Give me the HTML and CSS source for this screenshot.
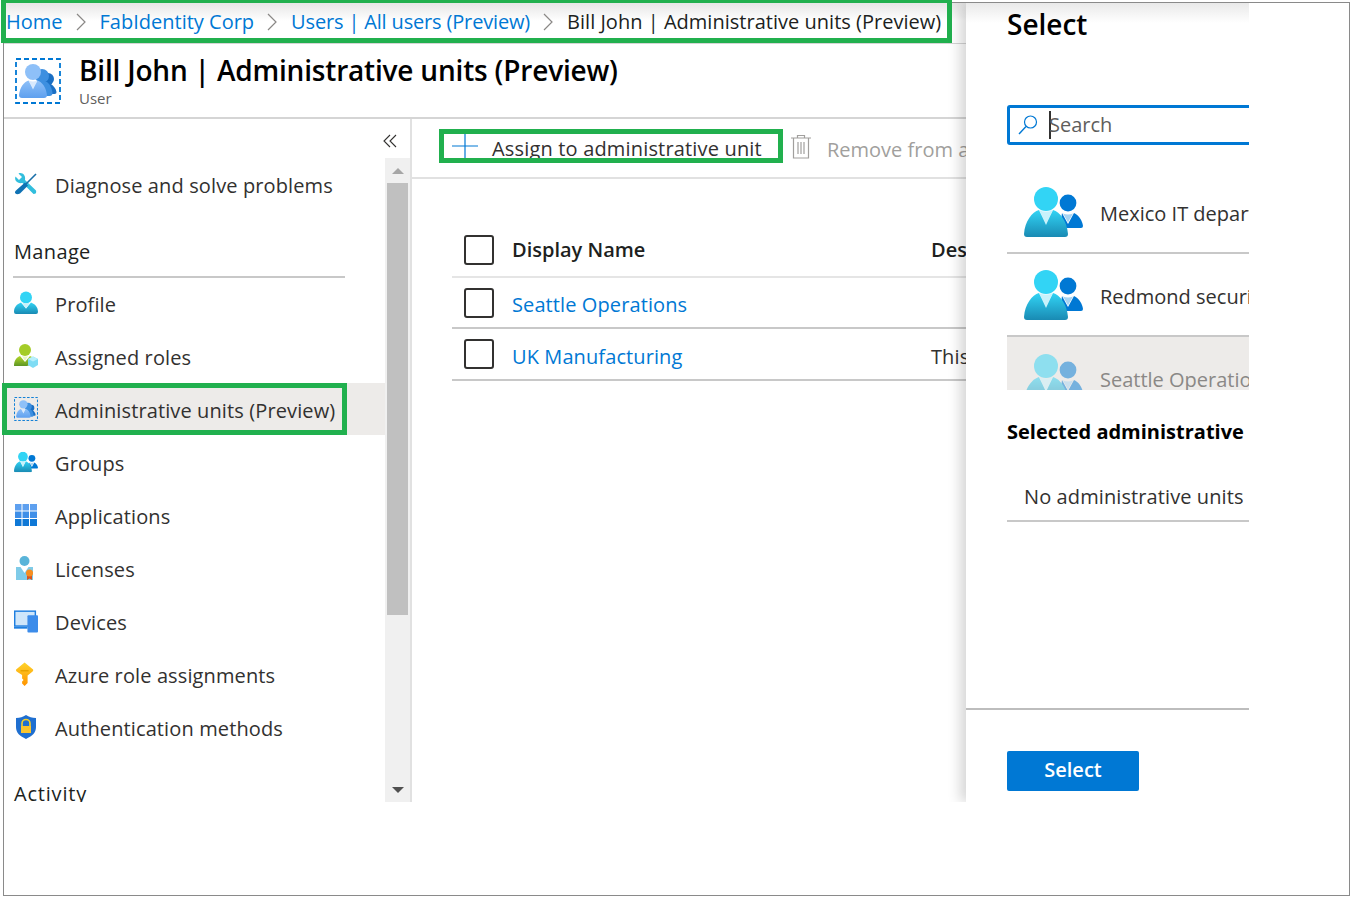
FILE: index.html
```html
<!DOCTYPE html>
<html lang="en">
<head>
<meta charset="utf-8">
<title>Bill John | Administrative units (Preview)</title>
<link rel="stylesheet" href="styles.css">
</head>
<body>
<svg class="defs" aria-hidden="true">
  <defs>
    <linearGradient id="gCyan" x1="0" y1="0" x2="0" y2="1"><stop offset="0" stop-color="#32d4f5"/><stop offset="1" stop-color="#198ab3"/></linearGradient>
    <linearGradient id="gPale" x1="0" y1="0" x2="0" y2="1"><stop offset="0" stop-color="#8ec0f8"/><stop offset="1" stop-color="#5ea0ef"/></linearGradient>
    <linearGradient id="gGreen" x1="0" y1="0" x2="0" y2="1"><stop offset="0" stop-color="#b4d82a"/><stop offset="1" stop-color="#5e9624"/></linearGradient>
    <linearGradient id="gKey" x1="0" y1="0" x2="0" y2="1"><stop offset="0" stop-color="#fed32a"/><stop offset="1" stop-color="#ff9300"/></linearGradient>
    <symbol id="people" viewBox="0 0 59 50">
      <circle cx="44" cy="16" r="8.400" fill="#0078d4"/>
      <path d="M36 40 38 26l6 11 6-11c5 2 8.500 8 9 13q0 2-2 2H36z" fill="#0078d4"/>
      <path d="M39 26.500q5 2 10 0l-5 9z" fill="#a8d4f2"/>
      <circle cx="22" cy="12" r="12" fill="#32d4f5"/>
      <path d="M0 47C1 34 8 25 15 23l7 13 7-13c7 2 14 11 15 24q0 3-3 3H3q-3 0-3-3z" fill="url(#gCyan)"/>
      <path d="M15 23q7 3 14 0l-7 15z" fill="#c8f2fb"/>
    </symbol>
    <symbol id="unit" viewBox="0 0 46 46">
      <rect x="1" y="1" width="44" height="44" fill="none" stroke="#0078d4" stroke-width="1.800" stroke-dasharray="5 3"/>
      <circle cx="33" cy="21" r="6" fill="#1a6fc4"/>
      <path d="M24 36V26h12c3 2 5 5 5.500 8q.3 2-2 2z" fill="#1a6fc4"/>
      <circle cx="27" cy="18" r="7" fill="#3d8fe0"/>
      <path d="M22 38V24h10c3 2 5 7 5.500 11q0 3-3 3z" fill="#3d8fe0"/>
      <circle cx="18" cy="14" r="8" fill="#8ec0f8"/>
      <path d="M4 37c1-8 5-13 9.500-14.500l4.500 7 4.500-7c4.500 1.500 8.500 6.500 9.500 14.500q0 3-3 3H7q-3 0-3-3z" fill="url(#gPale)"/>
      <path d="M13.500 22.500q4.500 2 9 0l-4.500 9z" fill="#d8e9fd"/>
    </symbol>
    <symbol id="person" viewBox="0 0 24 24">
      <circle cx="12" cy="6.500" r="6" fill="#32d4f5"/>
      <path d="M0 21c0-5 3-8 7-9.500l5 6 5-6c4 1.500 7 4.500 7 9.500q0 2-2 2H2q-2 0-2-2z" fill="url(#gCyan)"/>
      <path d="M8 11.500q4 1.500 8 0l-4 6z" fill="#c8f2fb"/>
    </symbol>
  </defs>
</svg>
<div class="frame">
  <div class="app">
    <div class="left">
      <div class="topbar">
        <nav class="crumbs">
          <a class="link">Home</a>
          <svg class="chev" viewBox="0 0 10 18"><path d="M1 1l8 8-8 8" fill="none" stroke="#8a8886" stroke-width="1.200"/></svg>
          <a class="link">FabIdentity Corp</a>
          <svg class="chev" viewBox="0 0 10 18"><path d="M1 1l8 8-8 8" fill="none" stroke="#8a8886" stroke-width="1.200"/></svg>
          <a class="link crumb-users">Users | All users (Preview)</a>
          <svg class="chev" viewBox="0 0 10 18"><path d="M1 1l8 8-8 8" fill="none" stroke="#8a8886" stroke-width="1.200"/></svg>
          <span class="crumb-now">Bill John | Administrative units (Preview)</span>
        </nav>
      </div>
      <header class="head">
        <svg class="head-icon"><use href="#unit"/></svg>
        <div class="head-text">
          <h1 class="title">Bill John | Administrative units (Preview)</h1>
          <div class="subtitle">User</div>
        </div>
      </header>
      <div class="body">
        <aside class="rail">
          <div class="collapse">
            <svg class="collapse-icon" viewBox="0 0 14 14"><path d="M7 1 1 7l6 6M13 1 7 7l6 6" fill="none" stroke="#323130" stroke-width="1.100"/></svg>
          </div>
          <div class="rail-row">
            <div class="nav">
              <a class="item">
                <svg class="ico" viewBox="0 0 24 24"><path d="M1.500 4.500 5 8l3-3-3.500-3.500C8 0 12 3 11 8l11 10.500q1 3.500-2.500 3.500L8.500 11C3 12 0 8 1.500 4.500z" fill="#32bedd"/><path d="M22 2 12 12" stroke="#1a6fa8" stroke-width="1.600" fill="none"/><path d="M11 10.500l3 3-8 8q-3 1.500-4.500 0t1-3.500z" fill="#0f72b4"/></svg>
                <span>Diagnose and solve problems</span>
              </a>
              <h2 class="section manage">Manage</h2>
              <a class="item"><svg class="ico"><use href="#person"/></svg><span>Profile</span></a>
              <a class="item">
                <svg class="ico" viewBox="0 0 24 24"><circle cx="11" cy="6" r="6" fill="#a4cc28"/><path d="M0 22c0-6 3-9 6-10l5 6 5-6c3 1 5 4 5.500 7L13 22z" fill="url(#gGreen)"/><path d="M8 12q3 1 6 0l-3 5z" fill="#e7f3c2"/><path d="M14 15l5-2.500 5 2.500v6l-5 3-5-3z" fill="#7fdcf4"/><path d="M14 15l5 2.500 5-2.500-5-2.500z" fill="#b8effb"/></svg>
                <span>Assigned roles</span>
              </a>
              <a class="item active"><svg class="ico"><use href="#unit"/></svg><span>Administrative units (Preview)</span></a>
              <a class="item"><svg class="ico" viewBox="0 0 59 50"><use href="#people"/></svg><span>Groups</span></a>
              <a class="item">
                <svg class="ico" viewBox="0 0 24 24"><path fill="#5ea0ef" d="M1 1h6.500v6.500H1zM8.500 1H15v6.500H8.500zM16 1h7v6.500h-7z"/><path fill="#3f8fe8" d="M1 8.500h6.500V15H1zM8.500 8.500H15V15H8.500zM16 8.500h7V15h-7z"/><path fill="#0f78d6" d="M1 16h6.500v7H1zM8.500 16H15v7H8.500zM16 16h7v7h-7z"/></svg>
                <span>Applications</span>
              </a>
              <a class="item">
                <svg class="ico" viewBox="0 0 24 24"><circle cx="10.500" cy="5" r="5" fill="#59b4d9"/><path d="M2 11h17v13H2z" fill="#7fcbe8"/><path d="M6.500 11l4 6 4-6z" fill="#fff"/><path d="M13 19v5l2.500-1.500L18 24v-5z" fill="#d9541e"/><circle cx="15.500" cy="17" r="3.500" fill="#f78d1e"/></svg>
                <span>Licenses</span>
              </a>
              <a class="item">
                <svg class="ico" viewBox="0 0 25 24"><path d="M0 1h23v17H0z" fill="#1f7fe0"/><path d="M1.500 2.500h20v14h-20z" fill="#cfe6fa"/><rect x="14" y="6" width="11" height="18" rx="1" fill="#3c8cea"/><path d="M0 18h14v2H0z" fill="#1f7fe0"/></svg>
                <span>Devices</span>
              </a>
              <a class="item">
                <svg class="ico" viewBox="1.400 0 24 24"><path d="M12 .5l8.500 7q.5 1-.5 2l-5 4V21l-3 3-2.500-2.500v-2l1.500-1.500-1.500-1.500v-3.500L4 9.500q-1-1-.5-2z" fill="url(#gKey)"/><path d="M8 8h8v1.500H8z" fill="#e8a200"/></svg>
                <span>Azure role assignments</span>
              </a>
              <a class="item">
                <svg class="ico" viewBox="0 0 24 24"><path d="M12 0c3 2 6 3 10 3v9c0 6-4 9-10 12C6 21 2 18 2 12V3c4 0 7-1 10-3z" fill="#1f6fd0"/><path d="M8 11V8.500a4 4 0 0 1 8 0V11" fill="none" stroke="#f7d02c" stroke-width="1.600"/><path d="M7 11h10v7H7z" fill="#fbc52c"/></svg>
                <span>Authentication methods</span>
              </a>
              <h2 class="section activity">Activity</h2>
            </div>
            <div class="scrollbar">
              <div class="arrow"><svg class="tri" viewBox="0 0 12 6"><path d="M6 0l6 6H0z" fill="#a6a6a6"/></svg></div>
              <div class="thumb"></div>
              <div class="track"></div>
              <div class="arrow"><svg class="tri" viewBox="0 0 12 6"><path d="M0 0h12L6 6z" fill="#505050"/></svg></div>
            </div>
          </div>
        </aside>
        <main class="main">
          <div class="toolbar">
            <button class="assign">
              <svg class="plus" viewBox="0 0 26 24"><path d="M0 12h26M13 0v24" stroke="#0078d4" stroke-width="1.200" fill="none"/></svg>
              <span>Assign to administrative unit</span>
            </button>
            <svg class="trash" viewBox="0 0 20 25"><path d="M0 4h20M6.500 4V1.500h7V4M2.500 4v20h15V4M7 8v12M10 8v12M13 8v12" fill="none" stroke="#a19f9d" stroke-width="1.200"/></svg>
            <span class="remove">Remove from administrative unit</span>
          </div>
          <div class="table">
            <div class="row row-head">
              <span class="check"></span>
              <span class="col-name">Display Name</span>
              <span class="col-desc">Description</span>
            </div>
            <div class="row">
              <span class="check"></span>
              <a class="col-name link">Seattle Operations</a>
              <span class="col-desc"></span>
            </div>
            <div class="row row-last">
              <span class="check"></span>
              <a class="col-name link">UK Manufacturing</a>
              <span class="col-desc">This administrative unit</span>
            </div>
          </div>
        </main>
      </div>
    </div>
    <section class="panel">
      <h2 class="panel-title">Select</h2>
      <div class="search">
        <svg class="lens" viewBox="0 0 20 20"><circle cx="12.500" cy="7" r="6" fill="none" stroke="#0078d4" stroke-width="1.200"/><path d="M8 11.500 1 19" stroke="#0078d4" stroke-width="1.400" fill="none"/></svg>
        <span class="caret"></span>
        <span class="placeholder">Search</span>
      </div>
      <div class="picks">
        <div class="pick"><svg class="pick-icon"><use href="#people"/></svg><span class="pick-name">Mexico IT department</span></div>
        <div class="pick"><svg class="pick-icon"><use href="#people"/></svg><span class="pick-name">Redmond security</span></div>
        <div class="pick picked"><svg class="pick-icon"><use href="#people"/></svg><span class="pick-name">Seattle Operations</span></div>
      </div>
      <h3 class="selected-title">Selected administrative units</h3>
      <div class="none">No administrative units</div>
      <div class="panel-foot"><button class="primary">Select</button></div>
    </section>
  </div>
</div>
</body>
</html>
```

FILE: styles.css
```css
* { box-sizing: border-box; }
html, body { margin: 0; padding: 0; background: #fff; }
body { font-family: "Open Sans", "Noto Sans", sans-serif; font-size: 20px; color: #323130; overflow: hidden; }
.defs { display: block; width: 0; height: 0; }
.frame { width: 1347px; height: 894px; margin: 2px 0 0 3px; border: 1px solid #8a8a8a; }
.app { display: flex; width: 1245px; height: 799px; white-space: nowrap; }
.left { width: 962px; flex: none; }
.link { color: #0078d4; }

.topbar { display: flex; height: 41px; border-bottom: 1px solid #d5d5d5; background: linear-gradient(#e6e6e6, #fff 18px); }
.crumbs { display: flex; align-items: center; gap: 13px; flex: none; width: 951px; height: 43px; margin: -3px 0 0 -3px; padding-top: 2px; border: solid #21b04e; border-width: 3px 5px 5px 5px; background: linear-gradient(#e6e6e6, #fff 18px); }
.chev { width: 10px; height: 18px; flex: none; margin-right: 1px; }
.crumb-users { letter-spacing: -.16px; }
.crumb-now { color: #201f1e; letter-spacing: .02px; }

.head { display: flex; align-items: center; height: 75px; padding-left: 11px; border-bottom: 2px solid #d5d5d5; gap: 18px; }
.head-icon { width: 46px; height: 46px; flex: none; }
.head-text { padding-bottom: 2px; }
.title { margin: 0; font-size: 28px; font-weight: 600; line-height: 36px; color: #000; letter-spacing: -.19px; }
.subtitle { font-size: 15px; line-height: 20px; color: #605e5c; }

.body { display: flex; height: 683px; }
.rail { width: 406px; flex: none; display: flex; flex-direction: column; clip-path: inset(0 0 0 -4px); }
.collapse { height: 39px; display: flex; align-items: center; justify-content: flex-end; padding: 5px 13px 0 0; }
.collapse-icon { width: 14px; height: 14px; }
.rail-row { display: flex; height: 644px; }
.nav { width: 381px; flex: none; padding-top: 1px; position: relative; z-index: 0; clip-path: inset(0 0 0 -4px); letter-spacing: .12px; }
.item { display: flex; align-items: center; height: 53px; padding-left: 10px; position: relative; color: #323130; }
.ico { width: 24px; height: 24px; flex: none; margin-right: 17px; margin-top: -4px; }
.active::before { content: ""; position: absolute; left: 0; right: 0; top: -1px; bottom: 2px; background: #edebe9; z-index: -1; }
.active::after { content: ""; position: absolute; left: -2px; right: 38px; top: -1px; bottom: 2px; border: 5px solid #21b04e; }
.section { margin: 0; font-size: 20px; font-weight: 500; color: #201f1e; letter-spacing: .35px; }
.manage { height: 66px; margin: 0 40px 0 9px; padding: 26px 0 0 1px; border-bottom: 2px solid #c8c8c8; line-height: 28px; }
.activity { padding: 25px 0 0 10px; line-height: 28px; letter-spacing: .8px; }

.scrollbar { width: 25px; flex: none; background: #f0f0f0; display: flex; flex-direction: column; padding: 0 2px; }
.arrow { height: 25px; flex: none; display: flex; align-items: center; justify-content: center; }
.tri { width: 12px; height: 6px; }
.thumb { height: 432px; flex: none; background: #c0c0c0; }
.track { flex: 1; }

.main { flex: 1; min-width: 0; border-left: 2px solid #e1e1e1; overflow: hidden; }
.toolbar { display: flex; align-items: center; height: 60px; padding: 0 0 5px 27px; border-bottom: 2px solid #e1e1e1; }
.assign { display: flex; align-items: center; width: 344px; height: 34px; padding: 6px 0 0 8px; border: 5px solid #21b04e; background: #fff; font: inherit; color: #323130; overflow: hidden; flex: none; letter-spacing: .17px; }
.plus { width: 26px; height: 24px; flex: none; margin: -6px 14px 0 0; }
.trash { width: 20px; height: 25px; flex: none; margin: 2px 18px 0 8px; }
.remove { color: #a19f9d; margin-top: 8px; margin-left: -2px; }

.table { margin: 44px 0 0 40px; }
.row { display: flex; align-items: center; height: 51px; padding-left: 12px; border-bottom: 2px solid #c8c8c8; }
.row-head { height: 55px; border-bottom-color: #e5e5e5; font-weight: 600; color: #201f1e; }
.row-last { height: 52px; }
.row:not(.row-head) .col-name, .row:not(.row-head) .col-desc { padding-top: 4px; letter-spacing: .1px; }
.check { width: 30px; height: 30px; flex: none; border: 2px solid #323130; border-radius: 3px; margin-right: 18px; }
.col-name { width: 419px; flex: none; }

.panel { width: 283px; flex: none; display: flex; flex-direction: column; position: relative; z-index: 1; overflow: hidden; background: linear-gradient(#e9e9e9, #fff 20px); box-shadow: -6px 0 12px rgba(0,0,0,.16); clip-path: inset(0 0 0 -24px); }
.panel-title { margin: 0 0 0 41px; height: 44px; font-size: 28px; line-height: 42px; font-weight: 600; color: #000; }
.search { display: flex; align-items: center; width: 260px; height: 40px; margin: 58px 0 0 41px; flex: none; border: 3px solid #0078d4; border-radius: 3px; }
.lens { width: 20px; height: 20px; flex: none; margin: 0 11px 0 8px; }
.caret { width: 2px; height: 28px; background: #323130; flex: none; margin-right: -2px; }
.placeholder { color: #605e5c; margin-top: -2px; }
.picks { margin: 25px 0 0 41px; height: 220px; overflow: hidden; flex: none; }
.pick { display: flex; align-items: center; height: 83px; padding-left: 17px; gap: 17px; border-bottom: 2px solid #c8c8c8; }
.pick:first-child { height: 84px; }
.pick-icon { width: 59px; height: 50px; flex: none; margin-top: 1px; }
.pick-name { padding-top: 4px; }
.picked { background: #edebe9; border-bottom: 0; color: #8a8886; }
.picked .pick-icon { opacity: .5; }
.picked .pick-name { padding-top: 2px; }
.selected-title { margin: 28px 0 0 41px; font-size: 20px; line-height: 28px; font-weight: 700; color: #000; flex: none; }
.none { margin: 0 0 0 41px; height: 76px; padding: 37px 0 0 17px; line-height: 28px; letter-spacing: .1px; border-bottom: 2px solid #c8c8c8; flex: none; }
.panel-foot { margin-top: auto; height: 94px; padding: 41px 0 0 41px; border-top: 2px solid #bdbdbd; flex: none; }
.primary { display: block; width: 132px; height: 40px; padding: 0 0 3px; border: 0; border-radius: 2px; background: #0078d4; color: #fff; font: inherit; font-weight: 600; }
```
